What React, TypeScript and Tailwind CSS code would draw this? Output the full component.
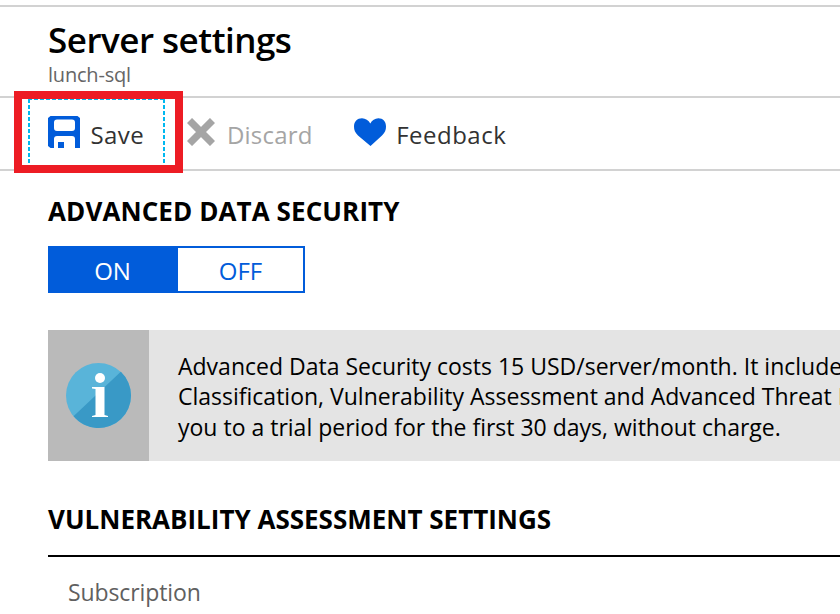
function SaveIcon() {
  return (
    <svg className="block h-8 w-8" viewBox="0 0 32 32" fill="none">
      <path
        fill="#015cda"
        fillRule="evenodd"
        d="M2.500 0H29.500L32 2V32H27V23Q27 20 24 20H9Q6 20 6 23V32H2.500L0 30V2ZM9 3.500Q6 3.500 6 6.500V12Q6 15 9 15H24Q27 15 27 12V6.500Q27 3.500 24 3.500Z"
      />
      <path fill="#015cda" d="M10 26h6v6h-6z" />
    </svg>
  );
}

function DiscardIcon() {
  return (
    <svg className="block h-7 w-7" viewBox="0 0 28 28">
      <path d="M2.500 2.500 25.500 25.500M25.500 2.500 2.500 25.500" stroke="#a5a5a5" strokeWidth="7.200" fill="none" />
    </svg>
  );
}

function HeartIcon() {
  return (
    <svg className="block h-7 w-8" viewBox="0 0 32 28">
      <path
        fill="#015cda"
        d="M16.500 28 4 17.500C1 14.500 0 12 0 8.500C0 3.500 3.300 .3 8 .3C11.500 .3 14.500 2.500 16.300 5.500C18 2.500 21 .3 24.300 .3C29 .3 32 3.500 32 8.500C32 12 31 14.500 28 17.500Z"
      />
    </svg>
  );
}

function InfoIcon() {
  return (
    <svg className="block h-[65px] w-[65px]" viewBox="0 0 65 65">
      <circle cx="32.500" cy="32.500" r="32.500" fill="#59b4d9" />
      <path fill="#3999c6" d="M54.800 8.860A32.500 32.500 0 1 1 7.500 53.270Z" />
      <circle cx="34" cy="15" r="5" fill="#fff" />
      <path fill="#fff" d="M26 24H38.500V52L42 53V54H26V53L29.500 52V26L26 25.500Z" />
    </svg>
  );
}

export default function App() {
  return (
    <div className="flex h-[614px] w-[840px] flex-col overflow-hidden bg-white pt-[5px] font-['Open_Sans','Noto_Sans',sans-serif] text-black">
      <header className="h-[93px] shrink-0 border-y-2 border-[#d2d2d2] pl-12">
        <h1 className="mt-[9px] h-[47px] text-[35px] leading-[47px] font-semibold tracking-[-0.5px]">
          Server settings
        </h1>
        <div className="text-[20px] leading-[24px] tracking-[-0.2px] text-[#666]">lunch-sql</div>
      </header>

      <div className="flex h-[73px] shrink-0 border-b-2 border-[#d2d2d2] text-[24px] leading-[33px] tracking-[0.4px]">
        <div className="z-10 -mt-[7px] ml-[14px] h-[82px] w-[169px] border-8 border-[#ed1c24] bg-white pl-[6px]">
          <button className="flex h-[66px] w-[137px] items-start bg-[repeating-linear-gradient(180deg,#00b8f0_0_4px,transparent_4px_6px),repeating-linear-gradient(180deg,#00b8f0_0_4px,transparent_4px_6px),repeating-linear-gradient(90deg,#00b8f0_0_4px,transparent_4px_6px)] bg-[size:2px_64px,2px_64px,100%_1px] bg-[position:left_top,right_top,left_top] bg-no-repeat pl-[20px] text-[#323232]">
            <span className="mt-[17px]">
              <SaveIcon />
            </span>
            <span className="mt-[19px] ml-[10.500px]">Save</span>
          </button>
        </div>
        <button className="ml-1 flex items-start text-[#a5a5a5]">
          <span className="mt-5">
            <DiscardIcon />
          </span>
          <span className="mt-[20px] ml-3 tracking-[0.2px]">Discard</span>
        </button>
        <button className="ml-[41px] flex items-start text-[#323232]">
          <span className="mt-5">
            <HeartIcon />
          </span>
          <span className="mt-[20px] ml-[10.500px] tracking-[0.5px]">Feedback</span>
        </button>
      </div>

      <main className="flex flex-col pl-12">
        <h2 className="mt-[22px] h-[36px] text-[26px] leading-[36px] font-bold tracking-[0.1px] whitespace-nowrap">
          ADVANCED DATA SECURITY
        </h2>
        <div className="mt-[17px] flex h-[47px] w-[257px] border-2 border-[#015cda] text-[24px] leading-[46px] text-[#015cda]">
          <button className="w-[128px] bg-[#015cda] pr-[3px] text-white">ON</button>
          <button className="flex-1">OFF</button>
        </div>

        <section className="mt-[37px] flex h-[131px] bg-[#e4e4e4]">
          <div className="flex w-[101px] shrink-0 items-center justify-center bg-[#bababa]">
            <InfoIcon />
          </div>
          <div className="pt-[21px] pl-[29px] text-[23px] leading-[30.500px] whitespace-nowrap">
            <p>Advanced Data Security costs 15 USD/server/month. It includes Data</p>
            <p className="-mt-px mb-px">Classification, Vulnerability Assessment and Advanced Threat Protection</p>
            <p>you to a trial period for the first 30 days, without charge.</p>
          </div>
        </section>

        <h2 className="mt-[40px] h-[36px] text-[26px] leading-[36px] font-bold whitespace-nowrap">
          VULNERABILITY ASSESSMENT SETTINGS
        </h2>
        <div className="mt-[18px] border-t-2 border-black pt-[19px] pl-[20px] text-[23px] leading-[33px] tracking-[-0.1px] text-[#606060]">
          Subscription
        </div>
      </main>
    </div>
  );
}
